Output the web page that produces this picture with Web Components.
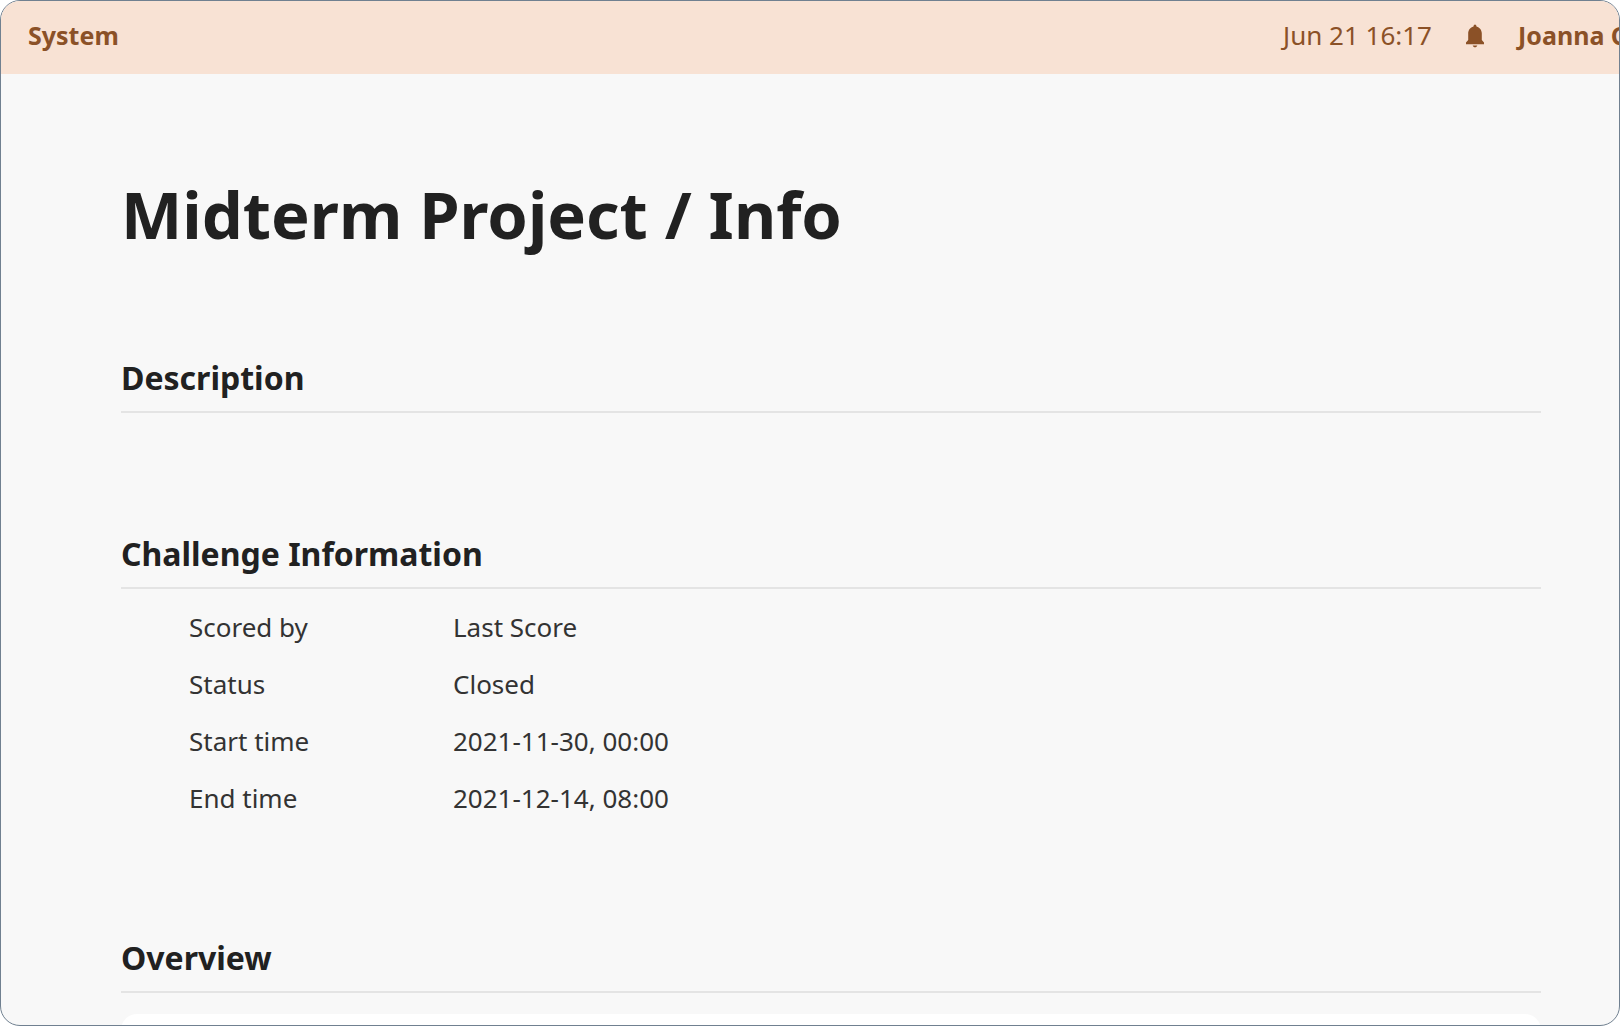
<!DOCTYPE html>
<html lang="en">
<head>
<meta charset="utf-8">
<title>Midterm Project / Info</title>
<style>
  body { margin: 0; background: #fff; font-family: "Noto Sans", sans-serif; font-size: 26px; color: #212121; }
</style>
</head>
<body>
<app-frame>
  <top-bar slot="bar">
    <a slot="brand" href="#">System</a>
    <time slot="tools" datetime="06-21T16:17">Jun 21 16:17</time>
    <bell-button slot="tools"></bell-button>
    <user-link slot="tools">Joanna C</user-link>
  </top-bar>
  <page-title>Midterm Project / Info</page-title>
  <info-section heading="Description"></info-section>
  <info-section heading="Challenge Information">
    <info-row label="Scored by">Last Score</info-row>
    <info-row label="Status">Closed</info-row>
    <info-row label="Start time">2021-11-30, 00:00</info-row>
    <info-row label="End time">2021-12-14, 08:00</info-row>
  </info-section>
  <info-section heading="Overview">
    <overview-card></overview-card>
  </info-section>
</app-frame>
<script>
  function define(name, markup, setup) {
    customElements.define(name, class extends HTMLElement {
      constructor() {
        super();
        const root = this.attachShadow({ mode: "open" });
        root.innerHTML = markup;
      }
      connectedCallback() { if (setup) setup(this, this.shadowRoot); }
    });
  }

  define("app-frame", `
    <style>
      :host { display: flex; flex-direction: column; box-sizing: border-box; height: 100vh; overflow: hidden; background: #f8f8f8; border: 1px solid #708090; border-radius: 20px; }
      main { flex: 1; min-height: 0; overflow: hidden; padding: 100px 78px 0 120px; }
    </style>
    <slot name="bar"></slot>
    <main><slot></slot></main>`);

  define("top-bar", `
    <style>
      :host { display: block; flex: none; background: #f8e2d4; color: #8b5127; line-height: 68px; padding: 0 0 5px 27px; }
      header { display: flex; justify-content: space-between; align-items: center; white-space: nowrap; }
      .tools { display: flex; align-items: center; gap: 33px; }
      ::slotted(a) { color: inherit; text-decoration: none; font-size: 25px; font-weight: 700; }
    </style>
    <header><slot name="brand"></slot><div class="tools"><slot name="tools"></slot></div></header>`);

  define("bell-button", `
    <style>
      :host { display: flex; }
      button { display: flex; padding: 2px 0 0; border: 0; background: none; color: inherit; }
      svg { display: block; width: 20px; height: 24px; }
    </style>
    <button aria-label="Notifications"><svg viewBox="0 0 20 24" fill="currentColor" aria-hidden="true">
      <path d="M10 .5C9.200 .5 8.700 1.200 8.500 2.400C5.300 3.300 3.200 6 3.200 9.500V16L1 18.400V20.300H19V18.400L16.800 16V9.500C16.800 6 14.700 3.300 11.500 2.400C11.300 1.200 10.800 .5 10 .5Z"/>
      <path d="M7.700 21.400H12.300C12 22.600 11.100 23.200 10 23.200S8 22.600 7.700 21.400Z"/>
    </svg></button>`);

  define("user-link", `
    <style>
      :host { display: block; width: 101px; font-size: 25px; font-weight: 700; }
      a { color: inherit; text-decoration: none; }
    </style>
    <a href="#"><slot></slot></a>`);

  define("page-title", `
    <style>
      :host { display: block; margin-bottom: 104px; }
      h1 { margin: 0; font-size: 65px; line-height: 80px; font-weight: 700; }
    </style>
    <h1><slot></slot></h1>`);

  define("info-section", `
    <style>
      :host { display: block; margin-bottom: 111px; }
      h2 { margin: 0; padding-bottom: 13px; border-bottom: 2px solid #e4e4e4; font-size: 32px; line-height: 40px; font-weight: 700; }
      div { padding-top: 10px; }
    </style>
    <section><h2></h2><div><slot></slot></div></section>`,
    (host, root) => { root.querySelector("h2").textContent = host.getAttribute("heading"); });

  define("info-row", `
    <style>
      :host { display: block; padding-left: 68px; }
      dl { display: grid; grid-template-columns: 264px 1fr; margin: 0; line-height: 57px; color: #333; }
      dd { margin: 0; }
    </style>
    <dl><dt></dt><dd><slot></slot></dd></dl>`,
    (host, root) => { root.querySelector("dt").textContent = host.getAttribute("label"); });

  define("overview-card", `
    <style>:host { display: block; height: 200px; margin-top: 11px; border-radius: 16px; background: #fff; }</style>`);
</script>
</body>
</html>
